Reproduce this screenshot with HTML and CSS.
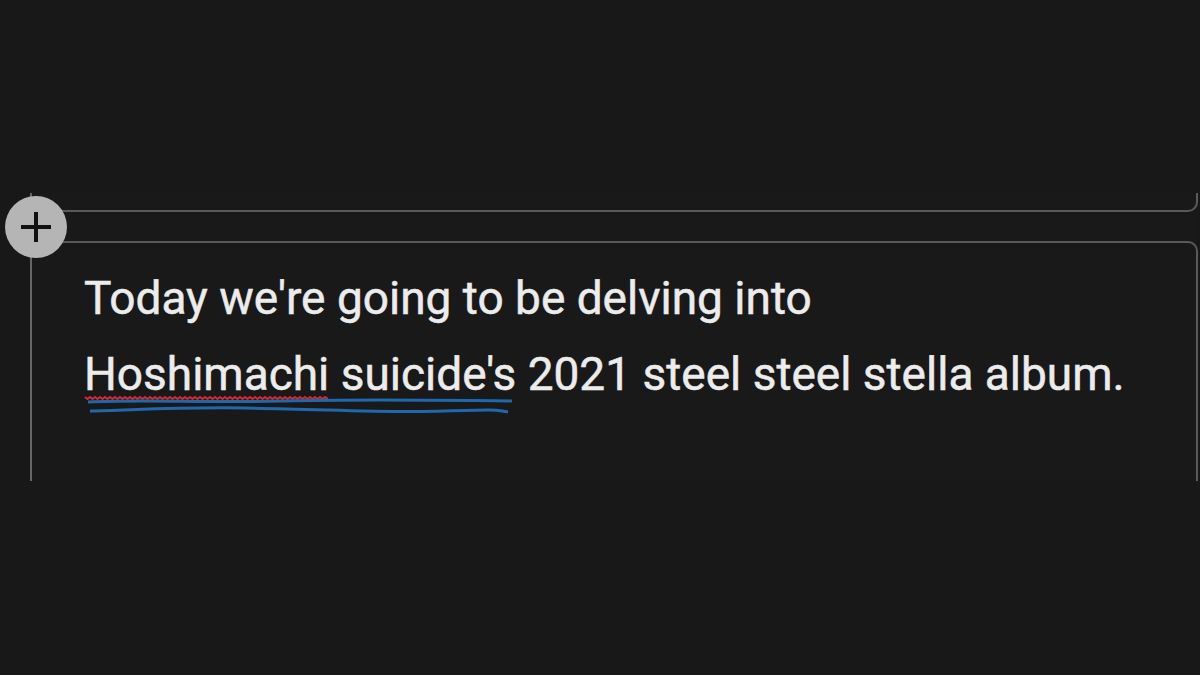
FILE: index.html
```html
<!DOCTYPE html>
<html lang="en">

<head>
    <meta charset="UTF-8">
    <meta name="viewport" content="width=device-width, initial-scale=1.0">
    <title>Editor</title>
    <link rel="stylesheet" href="styles.css">
</head>

<body>
    <div class="top_space"></div>
    <!-- 编辑区 -->
    <div class="panel">
        <div class="prev_cell"></div>
        <div class="cell">
            <p class="cell_text">Today we're going to be delving into<br><span class="marked">Hoshimachi suicide's<svg class="squiggle" width="440" height="26" viewBox="0 0 440 26">
                        <!-- 拼写检查的红色波浪线, 只画到 Hoshimachi 的末尾 -->
                        <svg x="0" y="0" width="244" height="12">
                            <path d="M1 5 l2.5 2 l2.5 -2 l2.5 2 l2.5 -2 l2.5 2 l2.5 -2 l2.5 2 l2.5 -2 l2.5 2 l2.5 -2 l2.5 2 l2.5 -2 l2.5 2 l2.5 -2 l2.5 2 l2.5 -2 l2.5 2 l2.5 -2 l2.5 2 l2.5 -2 l2.5 2 l2.5 -2 l2.5 2 l2.5 -2 l2.5 2 l2.5 -2 l2.5 2 l2.5 -2 l2.5 2 l2.5 -2 l2.5 2 l2.5 -2 l2.5 2 l2.5 -2 l2.5 2 l2.5 -2 l2.5 2 l2.5 -2 l2.5 2 l2.5 -2 l2.5 2 l2.5 -2 l2.5 2 l2.5 -2 l2.5 2 l2.5 -2 l2.5 2 l2.5 -2 l2.5 2 l2.5 -2 l2.5 2 l2.5 -2 l2.5 2 l2.5 -2 l2.5 2 l2.5 -2 l2.5 2 l2.5 -2 l2.5 2 l2.5 -2 l2.5 2 l2.5 -2 l2.5 2 l2.5 -2 l2.5 2 l2.5 -2 l2.5 2 l2.5 -2 l2.5 2 l2.5 -2 l2.5 2 l2.5 -2 l2.5 2 l2.5 -2 l2.5 2 l2.5 -2 l2.5 2 l2.5 -2 l2.5 2 l2.5 -2 l2.5 2 l2.5 -2 l2.5 2 l2.5 -2 l2.5 2 l2.5 -2 l2.5 2 l2.5 -2 l2.5 2 l2.5 -2 l2.5 2 l2.5 -2 l2.5 2 l2.5 -2 l2.5 2 l2.5 -2 l2.5 2 l2.5 -2 l2.5 2 l2.5 -2 l2.5 2 l2.5 -2 l2.5 2 l2.5 -2 l2.5 2 l2.5 -2 l2.5 2 l2.5 -2 l2.5 2 l2.5 -2" fill="none" stroke="#d62a31" stroke-width="2" />
                        </svg>
                        <!-- 语法检查的蓝色双线 -->
                        <path d="M4 10 C60 7 120 11 200 9 S330 8 428 9" fill="none" stroke="#1f68ad" stroke-width="3" />
                        <path d="M6 19 C40 19 80 15 160 16 S300 21 360 19 S410 18 424 20" fill="none" stroke="#1f68ad" stroke-width="3" />
                    </svg></span> 2021 steel steel stella album.</p>
        </div>
        <a href="javascript:;" class="add_btn">
            <svg width="32" height="32" viewBox="0 0 32 32">
                <path d="M16 1 V31 M1 16 H31" stroke="#111" stroke-width="4" />
            </svg>
        </a>
    </div>
</body>

</html>
```

FILE: styles.css
```css
* {
    margin: 0;
    padding: 0;
}

body {
    background-color: #181818;
    font-family: Roboto, "Liberation Sans", sans-serif;
    color: #ececec;
}

.top_space {
    height: 193px;
}

.panel {
    position: relative;
    height: 288px;
    margin-left: 30px;
    margin-right: 2px;
    border-left: 2px solid #666;
    background-color: #191919;
}

.prev_cell {
    height: 17px;
    border-right: 2px solid #5a5a5a;
    border-bottom: 2px solid #5a5a5a;
    border-bottom-right-radius: 10px;
}

.cell {
    margin-top: 29px;
    height: 240px;
    border-top: 2px solid #5a5a5a;
    border-right: 2px solid #5a5a5a;
    border-top-right-radius: 10px;
    padding-top: 17px;
    padding-left: 52px;
}

.cell_text {
    font-size: 46px;
    line-height: 76px;
    white-space: nowrap;
    -webkit-text-stroke: 0.5px #ececec;
}

.marked {
    position: relative;
}

.squiggle {
    position: absolute;
    left: 0;
    top: 45px;
}

.add_btn {
    position: absolute;
    left: -27px;
    top: 3px;
    width: 62px;
    height: 62px;
    border-radius: 50%;
    background-color: #b5b5b5;
    display: flex;
    align-items: center;
    justify-content: center;
}
```
